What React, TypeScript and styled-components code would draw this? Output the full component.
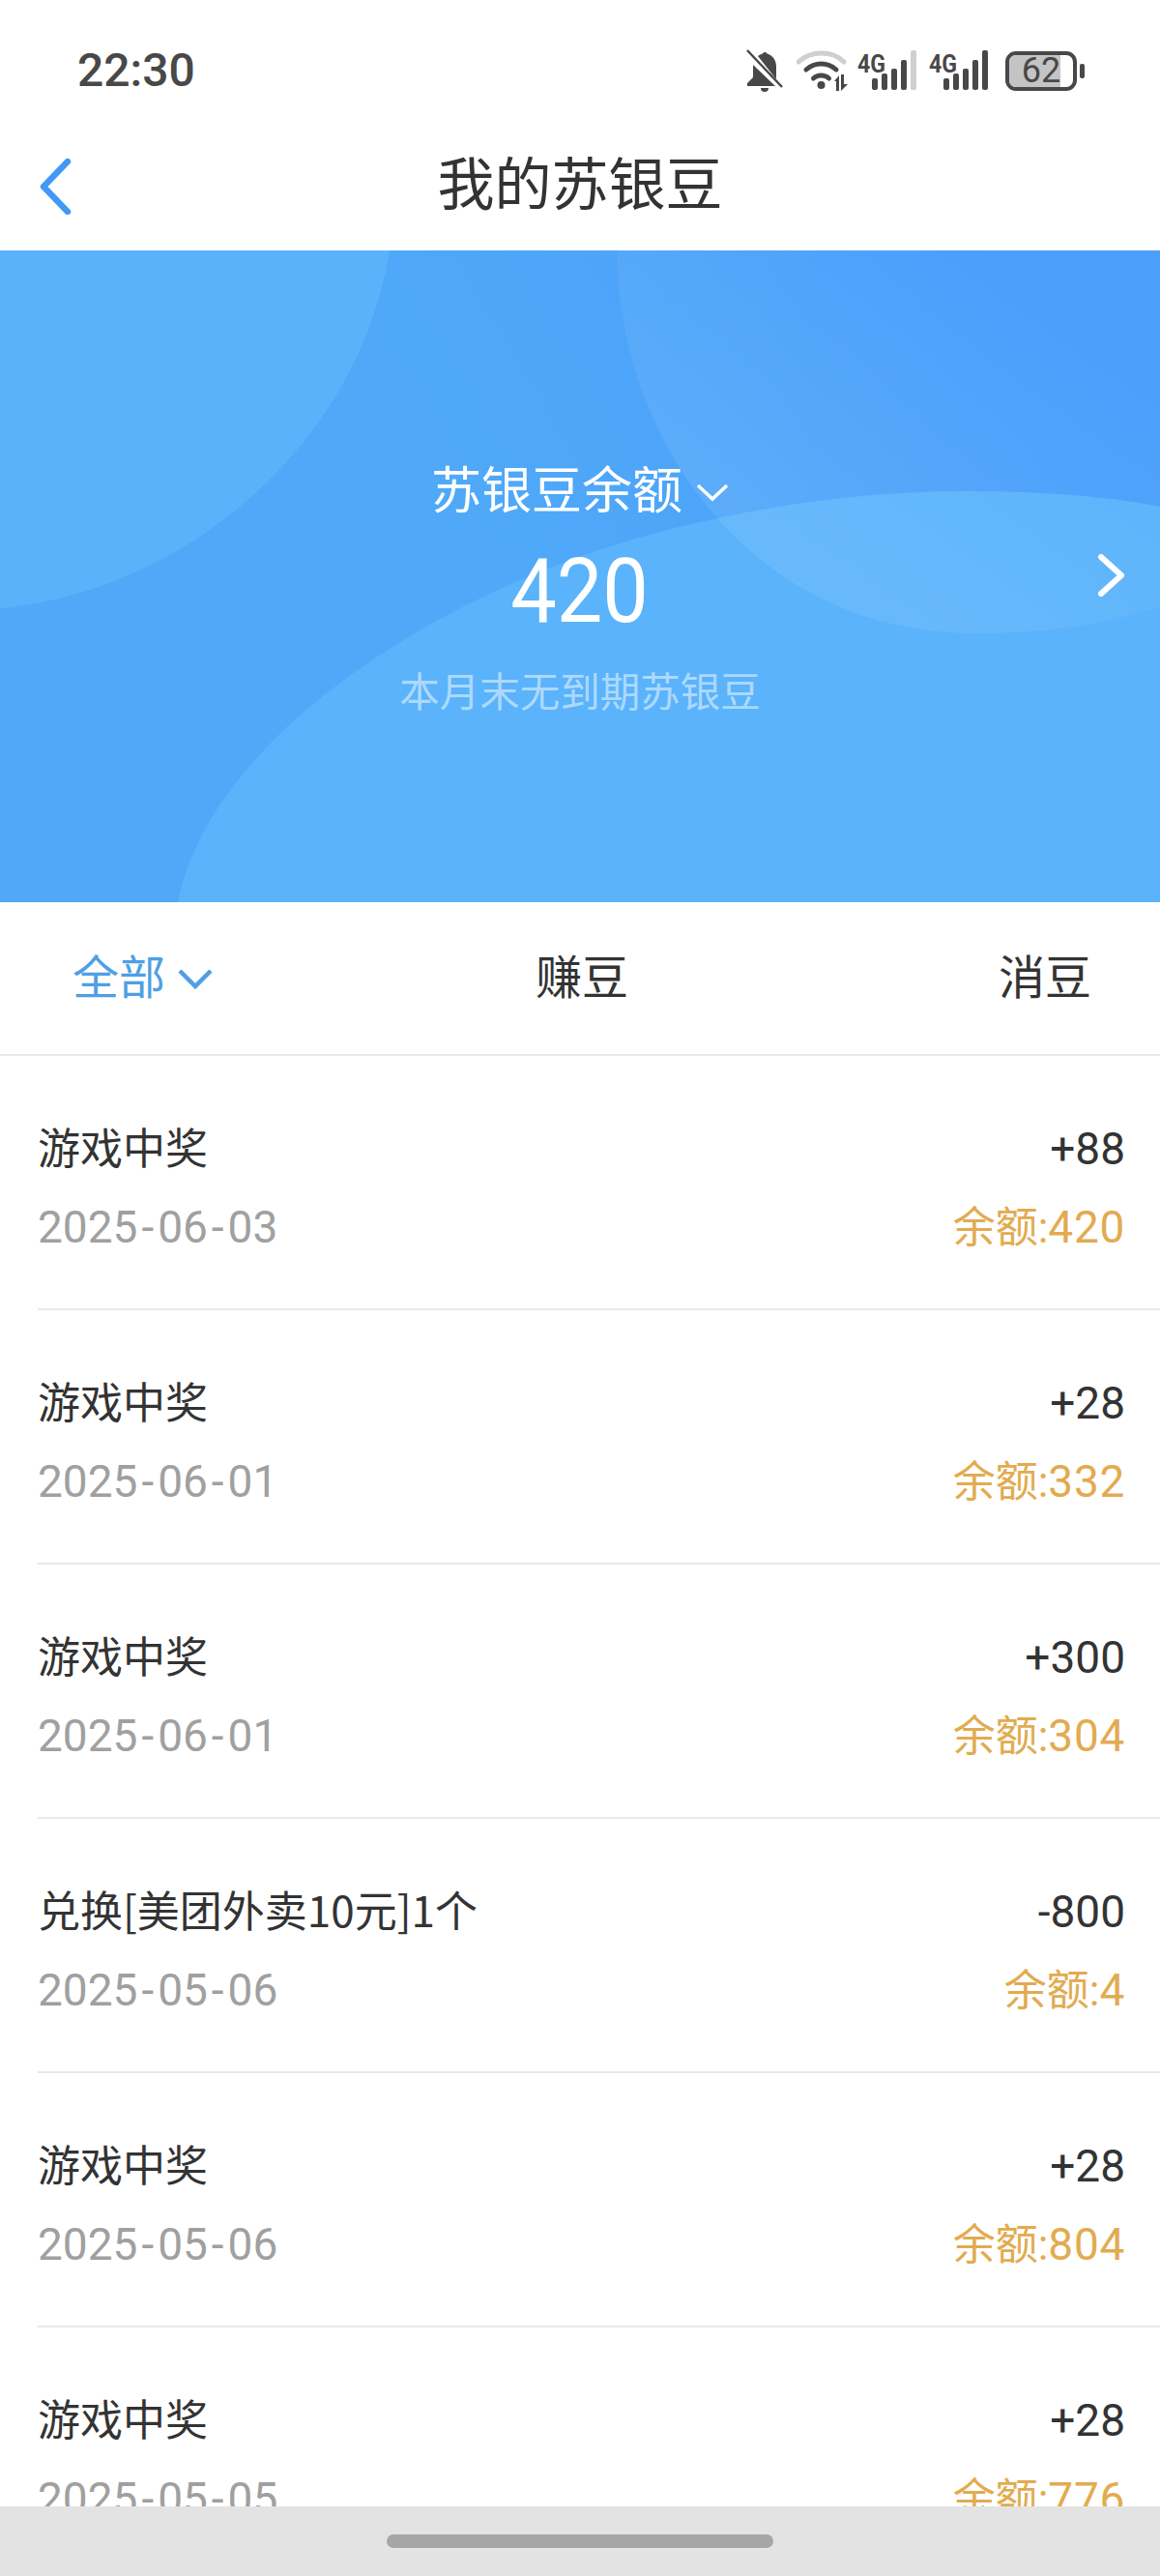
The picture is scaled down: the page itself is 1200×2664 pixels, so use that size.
import { FC } from "react";
import styled, { createGlobalStyle } from "styled-components";

type Record = {
  title: string;
  date: string;
  amount: string;
  balance: number;
};

const records: Record[] = [
  { title: "游戏中奖", date: "2025-06-03", amount: "+88", balance: 420 },
  { title: "游戏中奖", date: "2025-06-01", amount: "+28", balance: 332 },
  { title: "游戏中奖", date: "2025-06-01", amount: "+300", balance: 304 },
  { title: "兑换[美团外卖10元]1个", date: "2025-05-06", amount: "-800", balance: 4 },
  { title: "游戏中奖", date: "2025-05-06", amount: "+28", balance: 804 },
  { title: "游戏中奖", date: "2025-05-05", amount: "+28", balance: 776 },
];

const SignalIcon: FC<{ dimLast?: boolean }> = ({ dimLast }) => (
  <svg width="62" height="42" viewBox="0 0 62 42">
    <text x="0" y="23" fontFamily="Roboto, sans-serif" fontWeight="700" fontSize="25" fill="#484848" textLength="29" lengthAdjust="spacingAndGlyphs">
      4G
    </text>
    <rect x="15" y="29" width="6" height="12" rx="2" fill="#484848" />
    <rect x="25" y="24" width="6" height="17" rx="2" fill="#484848" />
    <rect x="35" y="19" width="6" height="22" rx="2" fill="#484848" />
    <rect x="45" y="10" width="6" height="31" rx="2" fill="#484848" />
    <rect x="55" y="0" width="6" height="41" rx="2" fill={dimLast ? "#cfcfcf" : "#484848"} />
  </svg>
);

const StatusIcons: FC = () => (
  <StatusIconRow>
    <BellSlot>
      <svg width="40" height="46" viewBox="0 0 40 46">
        <path d="M8 17 31 39H2v-3l6-6zM13 8c1.500-1.200 3-2 4.500-2.300a3 3 0 0 1 5.500 0C29 7.500 32 13 32 19v13z" fill="#484848" />
        <path d="M16 41h8a4 4 0 0 1-8 0z" fill="#484848" />
        <path d="M2 2l36 38" stroke="#484848" strokeWidth="2.500" />
      </svg>
    </BellSlot>
    <WifiSlot>
      <svg width="54" height="44" viewBox="0 0 54 44">
        <path d="M2 13C15 1 37 1 49 13" stroke="#cfcfcf" strokeWidth="5" fill="none" strokeLinecap="round" />
        <path d="M10 21C19 13 32 13 41 21" stroke="#484848" strokeWidth="5" fill="none" strokeLinecap="round" />
        <path d="M17.500 30C22 26 29 26 33.500 30" stroke="#484848" strokeWidth="5" fill="none" strokeLinecap="round" />
        <circle cx="25.500" cy="37" r="4" fill="#484848" />
        <path d="M39 33l5-6v16h-3v-10zM46 26h3v10h4l-7 7z" fill="#484848" />
      </svg>
    </WifiSlot>
    <SignalIcon dimLast />
    <SignalGap />
    <SignalIcon />
    <Battery>
      <BatteryLevel />
      <BatteryText>62</BatteryText>
    </Battery>
    <BatteryNub />
  </StatusIconRow>
);

const App: FC = () => (
  <>
    <GlobalStyle />
    <Page>
      <StatusBar>
        <Clock>22:30</Clock>
        <StatusIcons />
      </StatusBar>
      <NavBar>
        <BackButton>
          <svg width="34" height="58" viewBox="0 0 34 58">
            <path d="M30 3 5 29l25 26" stroke="#4299f5" strokeWidth="6.500" fill="none" strokeLinecap="round" strokeLinejoin="round" />
          </svg>
        </BackButton>
        <NavTitle>我的苏银豆</NavTitle>
      </NavBar>
      <Banner>
        <BannerArt viewBox="0 0 1200 674" preserveAspectRatio="none">
          <defs>
            <linearGradient id="bubble" x1="0" y1="1" x2="1" y2="0">
              <stop offset="0.2" stopColor="#ffffff" stopOpacity="0.09" />
              <stop offset="0.85" stopColor="#ffffff" stopOpacity="0" />
            </linearGradient>
          </defs>
          <path d="M0 0H403C372 196 196 352 0 370Z" fill="#5ab3fa" />
          <path d="M184 674C215 520 400 400 536 342C650 290 830 249 995 249C1080 249 1150 255 1200 265V674Z" fill="#5ab3fb" />
          <path d="M639 0C635 170 760 396 1010 396C1090 396 1150 385 1200 368V0Z" fill="url(#bubble)" />
        </BannerArt>
        <BalanceLabel>
          苏银豆余额
          <svg width="34" height="20" viewBox="0 0 34 20">
            <path d="M2 3 17 17 32 3" stroke="#ffffff" strokeWidth="3.500" fill="none" />
          </svg>
        </BalanceLabel>
        <BalanceValue>420</BalanceValue>
        <BalanceNote>本月末无到期苏银豆</BalanceNote>
        <BannerArrow>
          <svg width="32" height="44" viewBox="0 0 32 44">
            <path d="M6 3 27 22 6 41" stroke="#ffffff" strokeWidth="6" fill="none" strokeLinecap="round" strokeLinejoin="round" />
          </svg>
        </BannerArrow>
      </Banner>
      <Tabs>
        <Tab $active>
          全部
          <svg width="36" height="22" viewBox="0 0 36 22">
            <path d="M2 3 18 19 34 3" stroke="#4f9fe3" strokeWidth="4.500" fill="none" />
          </svg>
        </Tab>
        <Tab>赚豆</Tab>
        <LastTab>消豆</LastTab>
      </Tabs>
      <List>
        {records.map((record, index) => (
          <Row key={index}>
            <RowLine>
              <RowTitle>{record.title}</RowTitle>
              <Amount>{record.amount}</Amount>
            </RowLine>
            <RowLine>
              <RowDate>
                {record.date.split("-").map((part, i) => (
                  <span key={i}>
                    {i > 0 && <DateDash>-</DateDash>}
                    {part}
                  </span>
                ))}
              </RowDate>
              <Balance>
                余额:<BalanceNumber>{record.balance}</BalanceNumber>
              </Balance>
            </RowLine>
          </Row>
        ))}
      </List>
      <HomeBar>
        <HomePill />
      </HomeBar>
    </Page>
  </>
);

export default App;

const GlobalStyle = createGlobalStyle`
  html, body {
    margin: 0;
    padding: 0;
    background: #ffffff;
  }
`;

const Page = styled.div`
  width: 1200px;
  height: 2664px;
  display: flex;
  flex-direction: column;
  overflow: hidden;
  background: #ffffff;
  font-family: Roboto, "Noto Sans CJK SC", sans-serif;
`;

const StatusBar = styled.div`
  height: 127px;
  flex-shrink: 0;
  box-sizing: border-box;
  padding: 46px 78px 0 80px;
  display: flex;
  justify-content: space-between;
  align-items: flex-start;
`;

const Clock = styled.div`
  font-size: 48px;
  line-height: 54px;
  font-weight: 500;
  color: #484848;
`;

const StatusIconRow = styled.div`
  height: 54px;
  display: flex;
  align-items: center;
`;

const BellSlot = styled.div`
  display: flex;
  margin-right: 13px;
`;

const WifiSlot = styled.div`
  display: flex;
  margin-right: 9px;
`;

const SignalGap = styled.div`
  width: 12px;
`;

const Battery = styled.div`
  position: relative;
  width: 74px;
  height: 41px;
  margin-left: 17px;
  box-sizing: border-box;
  border: 4px solid #484848;
  border-radius: 11px;
  overflow: hidden;
  display: flex;
  align-items: center;
  justify-content: center;
`;

const BatteryLevel = styled.div`
  position: absolute;
  left: 0;
  top: 0;
  bottom: 0;
  width: 80%;
  background: #c4c4c4;
`;

const BatteryText = styled.span`
  position: relative;
  font-size: 36px;
  line-height: 33px;
  color: #484848;
`;

const BatteryNub = styled.div`
  width: 5px;
  height: 15px;
  margin-left: 3px;
  border-radius: 2px;
  background: #484848;
`;

const NavBar = styled.div`
  height: 132px;
  flex-shrink: 0;
  position: relative;
  display: flex;
  align-items: center;
  justify-content: center;
`;

const BackButton = styled.div`
  position: absolute;
  left: 40px;
  top: 37px;
  display: flex;
`;

const NavTitle = styled.div`
  font-size: 59px;
  line-height: 76px;
  margin-top: -2px;
  color: #333333;
`;

const Banner = styled.div`
  height: 674px;
  flex-shrink: 0;
  position: relative;
  overflow: hidden;
  box-sizing: border-box;
  padding-top: 215px;
  display: flex;
  flex-direction: column;
  align-items: center;
  color: #ffffff;
  background: linear-gradient(60deg, #4fa9f8 45%, #4b9ffb 85%);
`;

const BannerArt = styled.svg`
  position: absolute;
  inset: 0;
  width: 100%;
  height: 100%;
`;

const BalanceLabel = styled.div`
  position: relative;
  height: 70px;
  display: flex;
  align-items: center;
  gap: 14px;
  font-size: 52px;
  line-height: 70px;
`;

const BalanceValue = styled.div`
  position: relative;
  margin-top: 18px;
  height: 100px;
  font-size: 92px;
  line-height: 100px;
  transform: scaleX(0.92);
`;

const BalanceNote = styled.div`
  position: relative;
  margin-top: 27px;
  font-size: 41.5px;
  line-height: 56px;
  color: rgba(255, 255, 255, 0.5);
`;

const BannerArrow = styled.div`
  position: absolute;
  right: 35px;
  top: 314px;
  display: flex;
`;

const Tabs = styled.div`
  height: 159px;
  flex-shrink: 0;
  box-sizing: border-box;
  padding: 0 71px 0 75px;
  border-bottom: 2px solid #e8e8e8;
  display: grid;
  grid-template-columns: 1fr auto 1fr;
  align-items: center;
`;

const Tab = styled.div<{ $active?: boolean }>`
  display: flex;
  align-items: center;
  gap: 13px;
  font-size: 48px;
  line-height: 64px;
  color: ${({ $active }) => ($active ? "#4f9fe3" : "#333333")};
`;

const LastTab = styled(Tab)`
  justify-content: flex-end;
`;

const List = styled.div`
  flex: 1;
  min-height: 0;
  overflow: hidden;
  padding-left: 39px;
`;

const Row = styled.div`
  height: 263px;
  box-sizing: border-box;
  padding: 66px 36px 0 0;
  border-bottom: 2px solid #e8e8e8;
  display: flex;
  flex-direction: column;
  gap: 21px;
`;

const RowLine = styled.div`
  height: 60px;
  display: flex;
  align-items: center;
  justify-content: space-between;
`;

const RowTitle = styled.div`
  font-family: "Noto Sans CJK SC", sans-serif;
  font-size: 44px;
  line-height: 60px;
  margin-bottom: 6px;
  color: #333333;
`;

const Amount = styled.div`
  font-size: 46px;
  line-height: 60px;
  color: #333333;
`;

const RowDate = styled.div`
  font-size: 46px;
  line-height: 60px;
  color: #a0a0a0;
`;

const DateDash = styled.span`
  margin: 0 4px;
`;

const Balance = styled.div`
  font-size: 44px;
  line-height: 60px;
  color: #e2ab50;
`;

const BalanceNumber = styled.span`
  font-size: 46px;
  letter-spacing: 0.7px;
`;

const HomeBar = styled.div`
  height: 72px;
  flex-shrink: 0;
  background: #e3e3e3;
  display: flex;
  align-items: center;
  justify-content: center;
`;

const HomePill = styled.div`
  width: 400px;
  height: 14px;
  border-radius: 7px;
  background: #a6a6a6;
`;
